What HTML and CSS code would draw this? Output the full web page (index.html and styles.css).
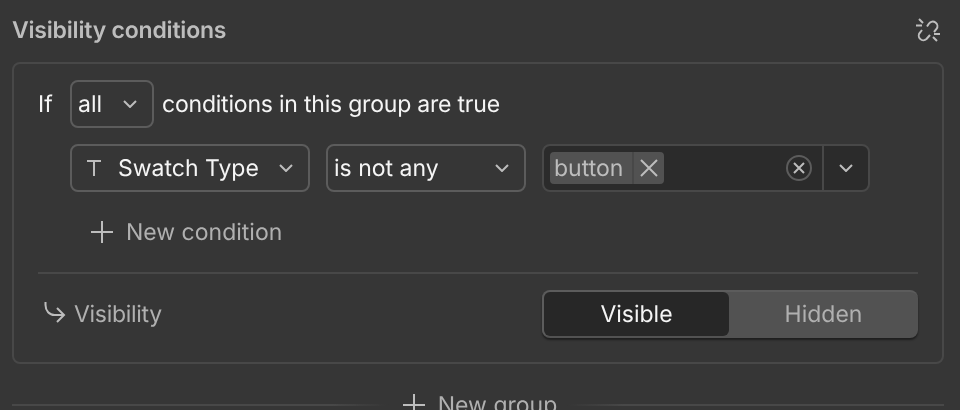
FILE: index.html
```html
<!DOCTYPE html>
<html lang="en">
<head>
<meta charset="utf-8">
<title>Visibility conditions</title>
<link rel="stylesheet" href="styles.css">
</head>
<body>
<div class="panel">
  <header class="head">
    <h2 class="title">Visibility conditions</h2>
    <svg class="unlink" width="26" height="26" viewBox="0 0 26 26" fill="none" stroke="#bdbdbd" stroke-width="2"><path d="M12 9.500l2-3a4.600 4.600 0 0 1 7.500 5.500l-2.500 3"/><path d="M7 13l-2 2.500a4.600 4.600 0 0 0 6.500 6.500l3.500-4"/><path d="M1 8.500h6M4 2l4 4M19 17h6M18 20l4 4"/></svg>
  </header>
  <section class="card">
    <div class="row-if">
      <span class="if">If</span>
      <div class="select select-all"><span>all</span><svg class="chev" width="14" height="8" viewBox="0 0 14 8"><path d="M1 1l6 6 6-6"/></svg></div>
      <span class="group-text">conditions in this group are true</span>
    </div>
    <div class="row-cond">
      <div class="select select-field">
        <svg class="t" width="14" height="16" viewBox="0 0 14 16"><path d="M0 1h14M7 1v15"/></svg>
        <span class="field-name">Swatch Type</span>
        <svg class="chev" width="14" height="8" viewBox="0 0 14 8"><path d="M1 1l6 6 6-6"/></svg>
      </div>
      <div class="select select-op"><span>is not any</span><svg class="chev" width="14" height="8" viewBox="0 0 14 8"><path d="M1 1l6 6 6-6"/></svg></div>
      <div class="multi">
        <div class="multi-main">
          <div class="tag">
            <span class="tag-text">button</span>
            <span class="tag-x"><svg width="18" height="18" viewBox="0 0 18 18"><path d="M1 1l16 16M17 1L1 17"/></svg></span>
          </div>
          <svg class="clear" width="26" height="26" viewBox="0 0 26 26"><circle class="clear-ring" cx="13" cy="13" r="12"/><path class="clear-x" d="M8 8l10 10M18 8L8 18"/></svg>
        </div>
        <div class="multi-arrow"><svg class="chev" width="14" height="8" viewBox="0 0 14 8"><path d="M1 1l6 6 6-6"/></svg></div>
      </div>
    </div>
    <div class="add add-cond">
      <svg class="plus" width="22" height="22" viewBox="0 0 22 22"><path d="M0 11h22M11 0v22"/></svg>
      <span>New condition</span>
    </div>
    <div class="rule"></div>
    <div class="row-vis">
      <div class="vis-label">
        <svg class="arrow" width="22" height="22" viewBox="0 0 22 22"><path d="M1.500 1v3c0 6 4 10 9 10h9.500M13 7l7 7-7 7"/></svg>
        <span class="vis-text">Visibility</span>
      </div>
      <div class="segment">
        <div class="seg seg-on">Visible</div>
        <div class="seg seg-off">Hidden</div>
      </div>
    </div>
  </section>
  <div class="group-row">
    <div class="line line-left"></div>
    <div class="add add-group">
      <svg class="plus" width="22" height="22" viewBox="0 0 22 22"><path d="M0 11h22M11 0v22"/></svg>
      <span>New group</span>
    </div>
    <div class="line line-right"></div>
  </div>
</div>
</body>
</html>
```
FILE: styles.css
```css
* { box-sizing: border-box; }
html, body { margin: 0; height: 410px; overflow: hidden; }
body {
  background: #363636;
  color: #f5f5f5;
  font-family: Inter, "Liberation Sans", sans-serif;
  font-size: 23px;
  line-height: 28px;
  text-rendering: geometricPrecision;
}
.panel { padding: 12px 16px 0 12px; will-change: transform; }
.head { display: flex; align-items: center; justify-content: space-between; height: 36px; padding-right: 3px; }
.title { margin: 0; font-size: 23px; font-weight: 600; color: #bdbdbd; letter-spacing: -0.2px; }
.card {
  margin-top: 14px;
  height: 302px;
  border: 2px solid #484848;
  border-radius: 8px;
  padding: 16px 24px 0;
}
.row-if { display: flex; align-items: center; height: 48px; }
.if { width: 32px; }
.group-text { letter-spacing: -0.21px; }
.select {
  display: flex;
  align-items: center;
  justify-content: space-between;
  height: 48px;
  border: 2px solid #5c5c5c;
  border-radius: 8px;
  padding: 0 15px 0 6px;
}
.select-all { width: 84px; margin-right: 8px; }
.chev { fill: none; stroke: #bdbdbd; stroke-width: 2; flex: none; }
.row-cond { display: flex; gap: 16px; height: 48px; margin: 16px 0 0 32px; }
.select-field { width: 240px; padding-left: 15px; }
.t { fill: none; stroke: #bdbdbd; stroke-width: 2; flex: none; }
.field-name { margin-left: 17px; margin-right: auto; }
.select-op { width: 200px; }
.multi {
  display: flex;
  width: 328px;
  height: 48px;
  border: 2px solid #484848;
  border-radius: 8px;
  background: #2b2b2b;
  overflow: hidden;
}
.multi-main { flex: 1; display: flex; align-items: center; justify-content: space-between; padding: 0 10px 0 6px; border-right: 2px solid #484848; }
.multi-arrow { width: 44px; display: flex; align-items: center; justify-content: center; }
.tag { display: flex; height: 32px; background: #525252; border-radius: 4px; color: #bdbdbd; }
.tag-text { padding: 2px 9px 0 4px; }
.tag-x { display: flex; align-items: center; justify-content: center; width: 32px; border-left: 2px solid #484848; }
.tag-x path { fill: none; stroke: #bdbdbd; stroke-width: 2; }
.clear-ring { fill: none; stroke: #5c5c5c; stroke-width: 2; }
.clear-x { fill: none; stroke: #bdbdbd; stroke-width: 2; }
.add { display: flex; align-items: center; color: #b0b0b0; gap: 13px; }
.plus { fill: none; stroke: #bdbdbd; stroke-width: 2; flex: none; }
.add-cond { height: 28px; margin: 26px 0 0 53px; }
.rule { height: 2px; background: #484848; margin: 26px 2px 0 0; width: 880px; }
.row-vis { display: flex; align-items: center; justify-content: space-between; width: 880px; margin-top: 16px; height: 48px; }
.vis-label { display: flex; align-items: center; gap: 8px; color: #b0b0b0; padding-left: 6px; }
.vis-text { letter-spacing: -0.3px; }
.arrow { fill: none; stroke: #bdbdbd; stroke-width: 2; margin-top: -4px; }
.segment {
  display: flex;
  width: 376px;
  height: 48px;
  background: #525252;
  border-radius: 8px;
  border-top: 2px solid #5c5c5c;
  box-shadow: 0 2px 2px rgba(0,0,0,.45);
  padding: 0 0 2px 2px;
}
.seg { display: flex; align-items: center; justify-content: center; }
.seg-on { width: 185px; background: #272727; color: #f5f5f5; border-radius: 6px; box-shadow: -2px 0 0 #5c5c5c; }
.seg-off { flex: 1; color: #b0b0b0; }
.group-row { position: relative; display: flex; align-items: center; justify-content: center; height: 28px; margin-top: 27px; width: 932px; }
.line { flex: 1; height: 2px; }
.line-left { background: linear-gradient(to right, #484848 85%, rgba(72,72,72,0)); }
.line-right { background: linear-gradient(to left, #484848 85%, rgba(72,72,72,0)); }
.add-group { padding: 0 12px; transform: translateX(2px); }
```
